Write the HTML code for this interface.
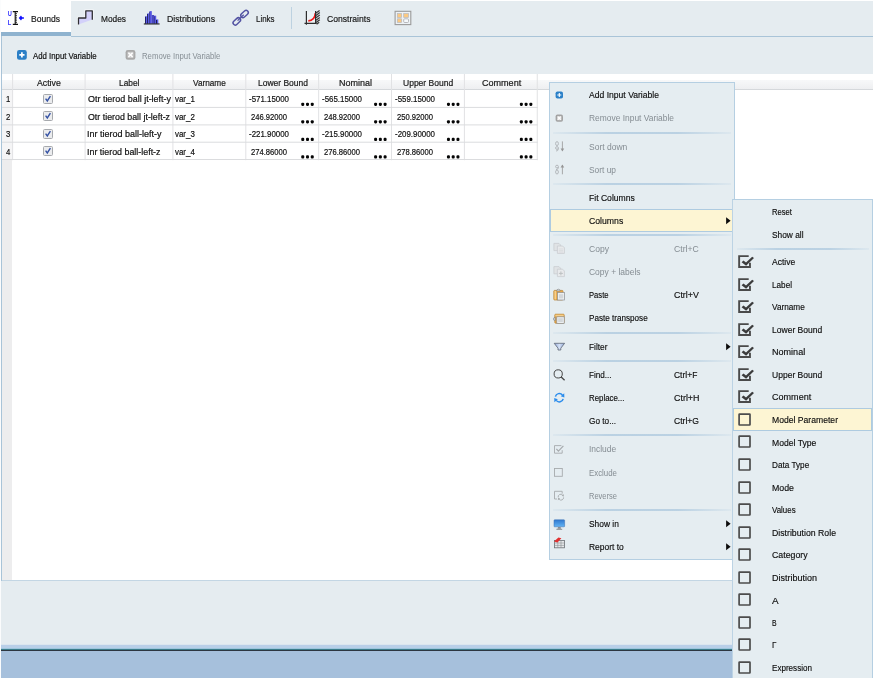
<!DOCTYPE html><html><head><meta charset="utf-8"><title>Bounds</title><style>
html,body{margin:0;padding:0;}
body{width:876px;height:678px;position:relative;overflow:hidden;background:#fff;font-family:"Liberation Sans",sans-serif;font-size:9.4px;color:#111;}
.abs{position:absolute;}
.t{position:absolute;white-space:nowrap;line-height:14px;height:14px;transform-origin:0 50%;}
.hdr{position:absolute;top:74px;height:15px;border-bottom:1px solid #d5d8db;background:linear-gradient(#ffffff 0%,#ffffff 38%,#f7f8f9 42%,#eeeff1 100%);box-sizing:content-box;}
.hl{position:absolute;height:1px;background:#e4e5e7;}
.vl{position:absolute;width:1px;background:#e9eaec;}
.dots{position:absolute;width:13px;height:3.2px;}
.dots i{position:absolute;top:0;width:3.2px;height:3.2px;background:#0a0a0a;border-radius:1.2px;}
.menu{position:absolute;background:#e5edf1;border:1px solid #b5cfe2;box-sizing:border-box;}
.sep{position:absolute;height:2px;margin-top:-0.5px;background:linear-gradient(90deg,rgba(176,203,224,0.15),rgba(172,200,222,0.75) 30%,rgba(172,200,222,0.75) 70%,rgba(176,203,224,0.15));}
.hi{position:absolute;background:#fdf5d3;border:1px solid #aecbe0;box-sizing:border-box;}
.arrow{position:absolute;width:0;height:0;border-top:3.5px solid transparent;border-bottom:3.5px solid transparent;border-left:4.6px solid #111;}
svg{position:absolute;overflow:visible;}
</style></head><body>
<div style="position:absolute;left:0;top:0;width:876px;height:678px;will-change:transform">
<div class="abs" style="left:0;top:1px;width:873px;height:73px;background:#e5ecf0"></div>
<div class="abs" style="left:0;top:0;width:71px;height:33px;background:#fff"></div>
<div class="abs" style="left:1px;top:32px;width:70px;height:4px;background:#8fb3cf"></div>
<div class="abs" style="left:71px;top:36px;width:802px;height:1px;background:#a9c4d8"></div>
<div class="abs" style="left:1px;top:36px;width:1px;height:612px;background:#a9c4d8"></div>
<div class="abs" style="left:291px;top:7px;width:1px;height:22px;background:#bdd2e1"></div>
<svg style="left:0;top:0" width="440" height="74" viewBox="0 0 440 74">
<!-- bounds icon -->
<g>
<text x="7.8" y="15.8" font-family="Liberation Sans, sans-serif" font-size="6.4" font-weight="bold" fill="#3434ff" textLength="4.1" lengthAdjust="spacingAndGlyphs">U</text>
<text x="7.8" y="24.8" font-family="Liberation Sans, sans-serif" font-size="6.4" font-weight="bold" fill="#3434ff" textLength="3.5" lengthAdjust="spacingAndGlyphs">L</text>
<path d="M12.8 11.6 H18 M12.8 24.4 H18 M15.2 11.6 V24.4" stroke="#111" stroke-width="1.1" fill="none"/>
<path d="M15.2 13.6 h1.8 M15.2 15.4 h1.8 M15.2 17.2 h1.8 M15.2 19 h1.8 M15.2 20.8 h1.8 M15.2 22.6 h1.8" stroke="#111" stroke-width="0.8"/>
<path d="M18.7 18 L21 15.6 L22.2 17.3 L23.9 17.3 L23.9 18.7 L22.2 18.7 L21 20.4 Z" fill="#1010ff"/>
</g>
<!-- modes icon -->
<g>
<path d="M78.5 24.4 V18 H85.8 V10.8 H92.3 V19.6" stroke="#fff" stroke-width="2.6" fill="none" opacity="0.8"/>
<path d="M78.5 24.4 V18 H85.8 V10.8 H92.3 V19.6 Z" fill="#d3d1fa"/>
<path d="M78.5 24.6 V18 H85.8 V10.8 H92.3 V19.8" stroke="#2f2f33" stroke-width="1.3" fill="none" stroke-linejoin="round"/>
</g>
<!-- distributions icon -->
<g>
<rect x="145" y="16.3" width="2.2" height="7.4" fill="#5a5aea"/><rect x="145" y="16.8" width="0.7" height="6.9" fill="#0a0a2a"/>
<rect x="147.2" y="13.4" width="2.2" height="10.3" fill="#5a5aea"/><rect x="147.2" y="14" width="0.7" height="9.7" fill="#0a0a2a"/>
<rect x="149.4" y="11.1" width="2.4" height="12.6" fill="#5252e0"/><rect x="149.4" y="12" width="0.6" height="11.7" fill="#20206a"/>
<rect x="151.8" y="15" width="2.3" height="8.7" fill="#4848c0"/>
<rect x="154.1" y="15.7" width="2.1" height="8" fill="#5a5aea"/><rect x="154.1" y="16.2" width="0.6" height="7.5" fill="#20206a"/>
<rect x="156.2" y="19.4" width="2.1" height="4.3" fill="#5a5aea"/><rect x="156.2" y="19.9" width="0.8" height="3.8" fill="#0a0a2a"/>
<rect x="143.8" y="23.4" width="15.8" height="1.1" fill="#222"/>
</g>
<!-- links icon -->
<g fill="none" stroke="#5252a2" stroke-width="1.45">
<rect x="-4.3" y="-2.2" width="8.6" height="4.4" rx="2.2" transform="translate(236.8 21.4) rotate(-43)"/>
<rect x="-4.3" y="-2.2" width="8.6" height="4.4" rx="2.2" transform="translate(244.5 14) rotate(-43)"/>
<path d="M237.6 20.6 L243.7 14.8" stroke-width="1.3"/>
</g>
<!-- constraints icon -->
<g>
<rect x="306.4" y="11.5" width="9.2" height="11.8" fill="#edf3f6"/>
<path d="M316 13 l3.6 -2.6 M316 15.4 l3.8 -2.8 M316 17.8 l3.8 -2.8 M316 20.2 l3.8 -2.8 M316 22.6 l3.8 -2.8 M316.6 24.2 l2.6 -2" stroke="#3a3a3a" stroke-width="1.25"/>
<path d="M308.3 20.9 C312.5 20.6 315 18 315.4 13" stroke="#f01818" stroke-width="1.7" fill="none"/>
<path d="M306.4 11.1 V24.7 M304.5 23.3 H316.7 M315.6 11.1 V23.3" stroke="#2e2e2e" stroke-width="1.2" fill="none"/>
</g>
<!-- grid icon -->
<g>
<rect x="395.1" y="11.3" width="15.7" height="13.3" fill="#edf2f6" stroke="#9a9a9a" stroke-width="1.1"/>
<rect x="397.3" y="13.6" width="4.3" height="3.8" fill="#fbc982" stroke="#b8b8bc" stroke-width="0.7"/>
<rect x="397.3" y="18.8" width="4.3" height="3.7" fill="#fbc982" stroke="#b8b8bc" stroke-width="0.7"/>
<rect x="403.7" y="13.6" width="4.8" height="3.8" fill="#fbc982" stroke="#b8b8bc" stroke-width="0.7"/>
<rect x="403.7" y="18.8" width="4.8" height="3.7" rx="1" fill="#f6f9fb" stroke="#a8a8ac" stroke-width="0.8"/>
</g>
<!-- toolbar add icon -->
<g>
<rect x="17" y="50" width="9.8" height="9.8" rx="2.2" fill="#2b7fc6"/>
<path d="M21.9 52.3 V57.5 M19.3 54.9 H24.5" stroke="#fff" stroke-width="1.7"/>
</g>
<!-- toolbar remove icon -->
<g>
<rect x="125.6" y="50" width="9.8" height="9.8" rx="2.2" fill="#a9a9a9"/>
<rect x="127.4" y="51.8" width="6.2" height="6.2" rx="0.8" fill="#c9c9c9"/>
<path d="M128.4 52.8 L132.6 57 M132.6 52.8 L128.4 57" stroke="#fff" stroke-width="1.5"/>
</g>
</svg>

<div class="abs" style="left:2px;top:74px;width:10px;height:86px;background:#f5f5f6"></div><div class="abs" style="left:2px;top:160px;width:10px;height:420px;background:#ededee"></div>
<div class="hdr" style="left:2px;width:871px"></div>
<svg style="left:0;top:70px" width="560" height="100" viewBox="0 70 560 100"><rect x="12.10" y="74" width="1" height="86.2" fill="#e1e2e4"/><rect x="84.60" y="74" width="1" height="86.2" fill="#e1e2e4"/><rect x="172.40" y="74" width="1" height="86.2" fill="#e1e2e4"/><rect x="245.30" y="74" width="1" height="86.2" fill="#e1e2e4"/><rect x="318.15" y="74" width="1" height="86.2" fill="#e1e2e4"/><rect x="391.00" y="74" width="1" height="86.2" fill="#e1e2e4"/><rect x="463.90" y="74" width="1" height="86.2" fill="#e1e2e4"/><rect x="536.75" y="74" width="1" height="86.2" fill="#e1e2e4"/><rect x="2" y="106.90" width="535.7" height="1" fill="#dbdcde"/><rect x="2" y="124.40" width="535.7" height="1" fill="#dbdcde"/><rect x="2" y="141.70" width="535.7" height="1" fill="#dbdcde"/><rect x="2" y="159.00" width="535.7" height="1" fill="#dbdcde"/><rect x="301.25" y="102.70" width="3.0" height="3.2" rx="1.1" fill="#050505"/><rect x="306.00" y="102.70" width="3.0" height="3.2" rx="1.1" fill="#050505"/><rect x="310.75" y="102.70" width="3.0" height="3.2" rx="1.1" fill="#050505"/><rect x="374.10" y="102.70" width="3.0" height="3.2" rx="1.1" fill="#050505"/><rect x="378.85" y="102.70" width="3.0" height="3.2" rx="1.1" fill="#050505"/><rect x="383.60" y="102.70" width="3.0" height="3.2" rx="1.1" fill="#050505"/><rect x="446.95" y="102.70" width="3.0" height="3.2" rx="1.1" fill="#050505"/><rect x="451.70" y="102.70" width="3.0" height="3.2" rx="1.1" fill="#050505"/><rect x="456.45" y="102.70" width="3.0" height="3.2" rx="1.1" fill="#050505"/><rect x="519.85" y="102.70" width="3.0" height="3.2" rx="1.1" fill="#050505"/><rect x="524.60" y="102.70" width="3.0" height="3.2" rx="1.1" fill="#050505"/><rect x="529.35" y="102.70" width="3.0" height="3.2" rx="1.1" fill="#050505"/><rect x="301.25" y="120.20" width="3.0" height="3.2" rx="1.1" fill="#050505"/><rect x="306.00" y="120.20" width="3.0" height="3.2" rx="1.1" fill="#050505"/><rect x="310.75" y="120.20" width="3.0" height="3.2" rx="1.1" fill="#050505"/><rect x="374.10" y="120.20" width="3.0" height="3.2" rx="1.1" fill="#050505"/><rect x="378.85" y="120.20" width="3.0" height="3.2" rx="1.1" fill="#050505"/><rect x="383.60" y="120.20" width="3.0" height="3.2" rx="1.1" fill="#050505"/><rect x="446.95" y="120.20" width="3.0" height="3.2" rx="1.1" fill="#050505"/><rect x="451.70" y="120.20" width="3.0" height="3.2" rx="1.1" fill="#050505"/><rect x="456.45" y="120.20" width="3.0" height="3.2" rx="1.1" fill="#050505"/><rect x="519.85" y="120.20" width="3.0" height="3.2" rx="1.1" fill="#050505"/><rect x="524.60" y="120.20" width="3.0" height="3.2" rx="1.1" fill="#050505"/><rect x="529.35" y="120.20" width="3.0" height="3.2" rx="1.1" fill="#050505"/><rect x="301.25" y="137.80" width="3.0" height="3.2" rx="1.1" fill="#050505"/><rect x="306.00" y="137.80" width="3.0" height="3.2" rx="1.1" fill="#050505"/><rect x="310.75" y="137.80" width="3.0" height="3.2" rx="1.1" fill="#050505"/><rect x="374.10" y="137.80" width="3.0" height="3.2" rx="1.1" fill="#050505"/><rect x="378.85" y="137.80" width="3.0" height="3.2" rx="1.1" fill="#050505"/><rect x="383.60" y="137.80" width="3.0" height="3.2" rx="1.1" fill="#050505"/><rect x="446.95" y="137.80" width="3.0" height="3.2" rx="1.1" fill="#050505"/><rect x="451.70" y="137.80" width="3.0" height="3.2" rx="1.1" fill="#050505"/><rect x="456.45" y="137.80" width="3.0" height="3.2" rx="1.1" fill="#050505"/><rect x="519.85" y="137.80" width="3.0" height="3.2" rx="1.1" fill="#050505"/><rect x="524.60" y="137.80" width="3.0" height="3.2" rx="1.1" fill="#050505"/><rect x="529.35" y="137.80" width="3.0" height="3.2" rx="1.1" fill="#050505"/><rect x="301.25" y="155.30" width="3.0" height="3.2" rx="1.1" fill="#050505"/><rect x="306.00" y="155.30" width="3.0" height="3.2" rx="1.1" fill="#050505"/><rect x="310.75" y="155.30" width="3.0" height="3.2" rx="1.1" fill="#050505"/><rect x="374.10" y="155.30" width="3.0" height="3.2" rx="1.1" fill="#050505"/><rect x="378.85" y="155.30" width="3.0" height="3.2" rx="1.1" fill="#050505"/><rect x="383.60" y="155.30" width="3.0" height="3.2" rx="1.1" fill="#050505"/><rect x="446.95" y="155.30" width="3.0" height="3.2" rx="1.1" fill="#050505"/><rect x="451.70" y="155.30" width="3.0" height="3.2" rx="1.1" fill="#050505"/><rect x="456.45" y="155.30" width="3.0" height="3.2" rx="1.1" fill="#050505"/><rect x="519.85" y="155.30" width="3.0" height="3.2" rx="1.1" fill="#050505"/><rect x="524.60" y="155.30" width="3.0" height="3.2" rx="1.1" fill="#050505"/><rect x="529.35" y="155.30" width="3.0" height="3.2" rx="1.1" fill="#050505"/></svg>
<div class="abs" style="left:43px;top:93.9px;width:10px;height:10px;border:1px solid #a6a9ad;border-radius:1.5px;box-sizing:border-box;background:#ebecee"><svg width="8" height="8" viewBox="0 0 8 8" style="left:0;top:0"><path d="M1.6 3.6 L3.3 6 L6.4 1.2" stroke="#3552a4" stroke-width="1.4" fill="none"/></svg></div>
<div class="abs" style="left:43px;top:111.4px;width:10px;height:10px;border:1px solid #a6a9ad;border-radius:1.5px;box-sizing:border-box;background:#ebecee"><svg width="8" height="8" viewBox="0 0 8 8" style="left:0;top:0"><path d="M1.6 3.6 L3.3 6 L6.4 1.2" stroke="#3552a4" stroke-width="1.4" fill="none"/></svg></div>
<div class="abs" style="left:43px;top:128.9px;width:10px;height:10px;border:1px solid #a6a9ad;border-radius:1.5px;box-sizing:border-box;background:#ebecee"><svg width="8" height="8" viewBox="0 0 8 8" style="left:0;top:0"><path d="M1.6 3.6 L3.3 6 L6.4 1.2" stroke="#3552a4" stroke-width="1.4" fill="none"/></svg></div>
<div class="abs" style="left:43px;top:146.4px;width:10px;height:10px;border:1px solid #a6a9ad;border-radius:1.5px;box-sizing:border-box;background:#ebecee"><svg width="8" height="8" viewBox="0 0 8 8" style="left:0;top:0"><path d="M1.6 3.6 L3.3 6 L6.4 1.2" stroke="#3552a4" stroke-width="1.4" fill="none"/></svg></div>
<div class="abs" style="left:2px;top:580px;width:871px;height:1px;background:#c3d6e4"></div>
<div class="abs" style="left:0;top:581px;width:873px;height:64px;background:#e5ecf0"></div>
<svg style="left:0;top:644px" width="873" height="34" viewBox="0 644 873 34"><rect x="0" y="644.8" width="873" height="5" fill="#b9cfe8"/><rect x="0" y="650" width="873" height="28" fill="#a6c0dc"/><rect x="0" y="648.8" width="873" height="1" fill="#35a3b6"/><rect x="0" y="649.7" width="873" height="1.05" fill="#05080c"/></svg>
<div class="abs" style="left:0;top:0;width:1px;height:678px;background:#fbfcfd"></div>
<div class="menu" style="left:549px;top:82px;width:186px;height:478px"></div>
<div class="hi" style="left:550px;top:209px;width:183px;height:23px"></div>
<svg style="left:725px;top:216px" width="8" height="10" viewBox="0 0 8 10"><path d="M1.1 1.2 L5.6 4.7 L1.1 8.2 Z" fill="#0c0c0c"/></svg>
<svg style="left:725px;top:342px" width="8" height="10" viewBox="0 0 8 10"><path d="M1.1 1.2 L5.6 4.7 L1.1 8.2 Z" fill="#0c0c0c"/></svg>
<svg style="left:725px;top:519px" width="8" height="10" viewBox="0 0 8 10"><path d="M1.1 1.2 L5.6 4.7 L1.1 8.2 Z" fill="#0c0c0c"/></svg>
<svg style="left:725px;top:542px" width="8" height="10" viewBox="0 0 8 10"><path d="M1.1 1.2 L5.6 4.7 L1.1 8.2 Z" fill="#0c0c0c"/></svg>
<div class="sep" style="left:553px;top:132px;width:178px"></div>
<div class="sep" style="left:553px;top:183px;width:178px"></div>
<div class="sep" style="left:553px;top:234px;width:178px"></div>
<div class="sep" style="left:553px;top:332px;width:178px"></div>
<div class="sep" style="left:553px;top:360px;width:178px"></div>
<div class="sep" style="left:553px;top:434px;width:178px"></div>
<div class="sep" style="left:553px;top:509px;width:178px"></div>
<svg style="left:549px;top:82px" width="24" height="478" viewBox="549 82 24 478">
<!-- add -->
<rect x="555.6" y="91.4" width="7.4" height="7.2" rx="1.8" fill="#2a80c8"/>
<path d="M559.3 93 V97 M557.3 95 H561.3" stroke="#fff" stroke-width="1.1"/>
<!-- remove -->
<rect x="555.6" y="114.6" width="7.4" height="7.2" rx="1.8" fill="#a3a3a3"/>
<rect x="557.2" y="116.2" width="4.2" height="4" fill="#dedede"/>
<path d="M557.8 116.7 L560.8 119.7 M560.8 116.7 L557.8 119.7" stroke="#fff" stroke-width="1.1"/>
<!-- sort down -->
<g stroke="#a8acb0" fill="none" stroke-width="0.8">
<ellipse cx="557" cy="143.6" rx="1.4" ry="2"/><ellipse cx="557" cy="148" rx="1.4" ry="1.4"/><path d="M558.3 148.5 C558.3 150.5 557.5 151 556 150.9"/>
<path d="M562.4 141.4 V150.6" stroke="#959595" stroke-width="0.8"/>
</g>
<path d="M560.6 148.4 L562.4 151.4 L564.2 148.4 Z" fill="#959595"/>
<!-- sort up -->
<g stroke="#a8acb0" fill="none" stroke-width="0.8">
<ellipse cx="557" cy="166.6" rx="1.4" ry="1.4"/><path d="M558.3 167 C558.3 169 557.5 169.6 556 169.5"/><ellipse cx="557" cy="172" rx="1.4" ry="2"/>
<path d="M562.4 165 V174.3" stroke="#959595" stroke-width="0.8"/>
</g>
<path d="M560.6 167.4 L562.4 164.4 L564.2 167.4 Z" fill="#959595"/>
<!-- copy (disabled) -->
<g stroke="#c9cdd0" stroke-width="0.8">
<path d="M553.9 243.4 H559 L560.6 245 V250.6 H553.9 Z" fill="#e0e3e5"/>
<path d="M557.4 246 H562.6 L564.4 247.8 V253.4 H557.4 Z" fill="#e8eaec"/>
<path d="M558.8 249 H563 M558.8 250.6 H563 M558.8 252 H563" stroke="#d2d5d8" stroke-width="0.6"/>
</g>
<!-- copy + labels (disabled) -->
<g stroke="#c9cdd0" stroke-width="0.8">
<path d="M553.9 266.6 H559 L560.6 268.2 V273.8 H553.9 Z" fill="#e0e3e5"/>
<path d="M557.4 269.2 H562.6 L564.4 271 V276.6 H557.4 Z" fill="#e8eaec"/>
<path d="M560.9 271.4 V275.4 M558.9 273.4 H562.9" stroke="#b9bdc0" stroke-width="0.9"/>
</g>
<!-- paste -->
<g>
<rect x="553.8" y="290.4" width="9.2" height="9.6" rx="0.8" fill="#e9a94a" stroke="#b9822e" stroke-width="0.7"/>
<rect x="554.5" y="291" width="1.6" height="8.4" fill="#f6cf8c"/>
<path d="M556.6 291 Q556.6 289.2 558.4 289.2 Q560.2 289.2 560.2 291 Z" fill="#d8dcdf" stroke="#7d8185" stroke-width="0.6"/>
<rect x="557.6" y="292.6" width="7" height="7.4" fill="#eceff1" stroke="#8c9094" stroke-width="0.7"/>
<rect x="559" y="294.2" width="4.2" height="4.2" fill="#d3d7da"/>
</g>
<!-- paste transpose -->
<g>
<rect x="554.8" y="314.2" width="9.4" height="9" rx="0.8" fill="#e9a94a" stroke="#b9822e" stroke-width="0.7"/>
<rect x="555.4" y="314.8" width="8.2" height="1.5" fill="#f6cf8c"/>
<path d="M555.2 317.4 Q553.4 317.4 553.4 319 Q553.4 320.6 555.2 320.6 Z" fill="#d8dcdf" stroke="#7d8185" stroke-width="0.6"/>
<rect x="556.8" y="316.8" width="7.4" height="6.6" fill="#eceff1" stroke="#8c9094" stroke-width="0.7"/>
<rect x="558.2" y="318.2" width="4.6" height="3.8" fill="#d3d7da"/>
</g>
<!-- filter -->
<defs><linearGradient id="fg" x1="0" y1="0" x2="1" y2="0"><stop offset="0" stop-color="#8fa6d8"/><stop offset="0.5" stop-color="#d6e2f6"/><stop offset="1" stop-color="#8fa6d8"/></linearGradient></defs>
<path d="M554.2 343.3 H564.6 L560.8 348.2 V350 H558 V348.2 Z" fill="url(#fg)" stroke="#5d6474" stroke-width="0.8" stroke-linejoin="round"/>
<!-- find -->
<circle cx="558.2" cy="373.9" r="4.1" fill="none" stroke="#444" stroke-width="1"/>
<path d="M561.2 377 L564.6 380.2" stroke="#444" stroke-width="1.3"/>
<!-- replace -->
<g fill="none" stroke="#2a8cec" stroke-width="1.5">
<path d="M555.4 396.6 A4 4 0 0 1 562.4 395"/>
<path d="M563.2 398.8 A4 4 0 0 1 556.2 400.4"/>
</g>
<path d="M560.8 396.2 L564.2 393.2 L564.4 397.4 Z" fill="#2a8cec"/>
<path d="M557.8 399.2 L554.4 402.2 L554.2 398 Z" fill="#2a8cec"/>
<!-- include (disabled) -->
<g stroke="#a6aaad" fill="none">
<path d="M561.4 445.6 H554.5 V453.2 H562.2 V450.2" stroke-width="0.9"/>
<path d="M556.4 448.8 L558.4 451.2 L563.4 445.8" stroke-width="1.2"/>
</g>
<!-- exclude (disabled) -->
<rect x="554.5" y="468.5" width="7.8" height="7.8" fill="none" stroke="#a6aaad" stroke-width="0.9"/>
<!-- reverse (disabled) -->
<g stroke="#a6aaad" fill="none" stroke-width="0.9">
<path d="M557 499 H554.5 V491.3 H562.2 V493.6"/>
<path d="M558.2 497.2 A2.6 2.6 0 0 1 562.6 495 M563.6 497.4 A2.6 2.6 0 0 1 559.2 499.4"/>
</g>
<path d="M561.6 495.6 L564 494.2 L563.6 496.8 Z M560.2 498.8 L557.8 500.2 L558.2 497.6 Z" fill="#a6aaad"/>
<!-- show in -->
<defs><linearGradient id="mg" x1="0" y1="0" x2="0" y2="1"><stop offset="0" stop-color="#2f78d0"/><stop offset="1" stop-color="#63b4f4"/></linearGradient></defs>
<rect x="554" y="519.8" width="10.6" height="7" rx="0.6" fill="url(#mg)" stroke="#3a6fb0" stroke-width="0.5"/>
<path d="M558 527 H560.6 L561 528.8 H557.6 Z" fill="#8a8e92"/><rect x="556.4" y="528.8" width="5.8" height="0.9" fill="#7a7e82"/>
<!-- report to -->
<rect x="554.6" y="540.6" width="9.8" height="7.2" fill="#e6e8ea" stroke="#6a6e72" stroke-width="0.8"/>
<path d="M557.8 540.6 V547.8 M561 540.6 V547.8 M554.6 543 H564.4 M554.6 545.4 H564.4" stroke="#8a8e92" stroke-width="0.6"/>
<path d="M554 541.6 L558.4 537.6 L561.4 538.2 L557.4 542.6 Z" fill="#e23030"/>
</svg>

<div class="menu" style="left:732.3px;top:199px;width:140.7px;height:490px;border-left:1.5px solid #bcd3e4"></div>
<div class="hi" style="left:733.4px;top:408.2px;width:139px;height:22.6px"></div>
<svg style="left:737px;top:253.8px" width="18" height="16" viewBox="0 0 18 16"><path d="M11.7 2.15 H2.15 V12.95 H12.95 V8.8" stroke="#4a4a4a" stroke-width="1.9" fill="none"/><path d="M4.6 8.3 L6.5 6.5 L9 8.6 L15.2 2.7 L17 4.1 L9.1 11.7 Z" fill="#3c3c3c"/></svg>
<svg style="left:737px;top:276.6px" width="18" height="16" viewBox="0 0 18 16"><path d="M11.7 2.15 H2.15 V12.95 H12.95 V8.8" stroke="#4a4a4a" stroke-width="1.9" fill="none"/><path d="M4.6 8.3 L6.5 6.5 L9 8.6 L15.2 2.7 L17 4.1 L9.1 11.7 Z" fill="#3c3c3c"/></svg>
<svg style="left:737px;top:299.2px" width="18" height="16" viewBox="0 0 18 16"><path d="M11.7 2.15 H2.15 V12.95 H12.95 V8.8" stroke="#4a4a4a" stroke-width="1.9" fill="none"/><path d="M4.6 8.3 L6.5 6.5 L9 8.6 L15.2 2.7 L17 4.1 L9.1 11.7 Z" fill="#3c3c3c"/></svg>
<svg style="left:737px;top:321.5px" width="18" height="16" viewBox="0 0 18 16"><path d="M11.7 2.15 H2.15 V12.95 H12.95 V8.8" stroke="#4a4a4a" stroke-width="1.9" fill="none"/><path d="M4.6 8.3 L6.5 6.5 L9 8.6 L15.2 2.7 L17 4.1 L9.1 11.7 Z" fill="#3c3c3c"/></svg>
<svg style="left:737px;top:344.0px" width="18" height="16" viewBox="0 0 18 16"><path d="M11.7 2.15 H2.15 V12.95 H12.95 V8.8" stroke="#4a4a4a" stroke-width="1.9" fill="none"/><path d="M4.6 8.3 L6.5 6.5 L9 8.6 L15.2 2.7 L17 4.1 L9.1 11.7 Z" fill="#3c3c3c"/></svg>
<svg style="left:737px;top:366.7px" width="18" height="16" viewBox="0 0 18 16"><path d="M11.7 2.15 H2.15 V12.95 H12.95 V8.8" stroke="#4a4a4a" stroke-width="1.9" fill="none"/><path d="M4.6 8.3 L6.5 6.5 L9 8.6 L15.2 2.7 L17 4.1 L9.1 11.7 Z" fill="#3c3c3c"/></svg>
<svg style="left:737px;top:389.3px" width="18" height="16" viewBox="0 0 18 16"><path d="M11.7 2.15 H2.15 V12.95 H12.95 V8.8" stroke="#4a4a4a" stroke-width="1.9" fill="none"/><path d="M4.6 8.3 L6.5 6.5 L9 8.6 L15.2 2.7 L17 4.1 L9.1 11.7 Z" fill="#3c3c3c"/></svg>
<svg style="left:737px;top:411.6px" width="18" height="16" viewBox="0 0 18 16"><rect x="2.1" y="2.1" width="10.9" height="10.9" rx="0.4" stroke="#4c4c4c" stroke-width="1.7" fill="none"/></svg>
<svg style="left:737px;top:434.4px" width="18" height="16" viewBox="0 0 18 16"><rect x="2.1" y="2.1" width="10.9" height="10.9" rx="0.4" stroke="#4c4c4c" stroke-width="1.7" fill="none"/></svg>
<svg style="left:737px;top:457.0px" width="18" height="16" viewBox="0 0 18 16"><rect x="2.1" y="2.1" width="10.9" height="10.9" rx="0.4" stroke="#4c4c4c" stroke-width="1.7" fill="none"/></svg>
<svg style="left:737px;top:479.5px" width="18" height="16" viewBox="0 0 18 16"><rect x="2.1" y="2.1" width="10.9" height="10.9" rx="0.4" stroke="#4c4c4c" stroke-width="1.7" fill="none"/></svg>
<svg style="left:737px;top:502.0px" width="18" height="16" viewBox="0 0 18 16"><rect x="2.1" y="2.1" width="10.9" height="10.9" rx="0.4" stroke="#4c4c4c" stroke-width="1.7" fill="none"/></svg>
<svg style="left:737px;top:524.5px" width="18" height="16" viewBox="0 0 18 16"><rect x="2.1" y="2.1" width="10.9" height="10.9" rx="0.4" stroke="#4c4c4c" stroke-width="1.7" fill="none"/></svg>
<svg style="left:737px;top:547.3px" width="18" height="16" viewBox="0 0 18 16"><rect x="2.1" y="2.1" width="10.9" height="10.9" rx="0.4" stroke="#4c4c4c" stroke-width="1.7" fill="none"/></svg>
<svg style="left:737px;top:569.8px" width="18" height="16" viewBox="0 0 18 16"><rect x="2.1" y="2.1" width="10.9" height="10.9" rx="0.4" stroke="#4c4c4c" stroke-width="1.7" fill="none"/></svg>
<svg style="left:737px;top:592.3px" width="18" height="16" viewBox="0 0 18 16"><rect x="2.1" y="2.1" width="10.9" height="10.9" rx="0.4" stroke="#4c4c4c" stroke-width="1.7" fill="none"/></svg>
<svg style="left:737px;top:614.5px" width="18" height="16" viewBox="0 0 18 16"><rect x="2.1" y="2.1" width="10.9" height="10.9" rx="0.4" stroke="#4c4c4c" stroke-width="1.7" fill="none"/></svg>
<svg style="left:737px;top:637.2px" width="18" height="16" viewBox="0 0 18 16"><rect x="2.1" y="2.1" width="10.9" height="10.9" rx="0.4" stroke="#4c4c4c" stroke-width="1.7" fill="none"/></svg>
<svg style="left:737px;top:659.7px" width="18" height="16" viewBox="0 0 18 16"><rect x="2.1" y="2.1" width="10.9" height="10.9" rx="0.4" stroke="#4c4c4c" stroke-width="1.7" fill="none"/></svg>
<div class="sep" style="left:737px;top:248px;width:132px"></div>
<div class="t" style="left:31.00px;top:12px;font-size:9.9px;color:#1c1c1c;transform:scaleX(0.8657);-webkit-text-stroke:0.2px #111;">Bounds</div>
<div class="t" style="left:100.75px;top:12px;font-size:9.9px;color:#1c1c1c;transform:scaleX(0.8434);-webkit-text-stroke:0.2px #111;">Modes</div>
<div class="t" style="left:167.00px;top:12px;font-size:9.9px;color:#1c1c1c;transform:scaleX(0.8833);-webkit-text-stroke:0.2px #111;">Distributions</div>
<div class="t" style="left:256.00px;top:12px;font-size:9.9px;color:#1c1c1c;transform:scaleX(0.8022);-webkit-text-stroke:0.2px #111;">Links</div>
<div class="t" style="left:327.25px;top:12px;font-size:9.9px;color:#1c1c1c;transform:scaleX(0.8708);-webkit-text-stroke:0.2px #111;">Constraints</div>
<div class="t" style="left:33.10px;top:49px;font-size:8.8px;color:#111;transform:scaleX(0.8866);-webkit-text-stroke:0.2px #111;">Add Input Variable</div>
<div class="t" style="left:141.60px;top:49px;font-size:8.8px;color:#868e94;transform:scaleX(0.8824);">Remove Input Variable</div>
<div class="t" style="left:36.70px;top:76px;font-size:9.0px;color:#1e1e1e;transform:scaleX(0.9708);-webkit-text-stroke:0.2px #111;">Active</div>
<div class="t" style="left:118.80px;top:76px;font-size:9.0px;color:#1e1e1e;transform:scaleX(0.9260);-webkit-text-stroke:0.2px #111;">Label</div>
<div class="t" style="left:193.10px;top:76px;font-size:9.0px;color:#1e1e1e;transform:scaleX(0.9147);-webkit-text-stroke:0.2px #111;">Varname</div>
<div class="t" style="left:257.90px;top:76px;font-size:9.0px;color:#1e1e1e;transform:scaleX(0.9426);-webkit-text-stroke:0.2px #111;">Lower Bound</div>
<div class="t" style="left:338.90px;top:76px;font-size:9.0px;color:#1e1e1e;transform:scaleX(0.9995);-webkit-text-stroke:0.2px #111;">Nominal</div>
<div class="t" style="left:402.90px;top:76px;font-size:9.0px;color:#1e1e1e;transform:scaleX(0.9463);-webkit-text-stroke:0.2px #111;">Upper Bound</div>
<div class="t" style="left:481.80px;top:76px;font-size:9.0px;color:#1e1e1e;transform:scaleX(1.0047);-webkit-text-stroke:0.2px #111;">Comment</div>
<div class="t" style="left:5.80px;top:92px;font-size:9.8px;color:#111;transform:scaleX(0.7885);-webkit-text-stroke:0.2px #111;">1</div>
<div class="t" style="left:87.80px;top:92px;font-size:9.0px;color:#111;transform:scaleX(0.9936);-webkit-text-stroke:0.2px #111;">Otr tierod ball jt-left-y</div>
<div class="t" style="left:175.00px;top:92px;font-size:9.0px;color:#111;transform:scaleX(0.8794);-webkit-text-stroke:0.2px #111;">var_1</div>
<div class="t" style="left:249.00px;top:92px;font-size:9.4px;color:#111;transform:scaleX(0.8429);-webkit-text-stroke:0.2px #111;">-571.15000</div>
<div class="t" style="left:322.00px;top:92px;font-size:9.4px;color:#111;transform:scaleX(0.8429);-webkit-text-stroke:0.2px #111;">-565.15000</div>
<div class="t" style="left:395.00px;top:92px;font-size:9.4px;color:#111;transform:scaleX(0.8429);-webkit-text-stroke:0.2px #111;">-559.15000</div>
<div class="t" style="left:5.80px;top:110px;font-size:9.8px;color:#111;transform:scaleX(0.7885);-webkit-text-stroke:0.2px #111;">2</div>
<div class="t" style="left:87.80px;top:110px;font-size:9.0px;color:#111;transform:scaleX(0.9817);-webkit-text-stroke:0.2px #111;">Otr tierod ball jt-left-z</div>
<div class="t" style="left:175.00px;top:110px;font-size:9.0px;color:#111;transform:scaleX(0.8794);-webkit-text-stroke:0.2px #111;">var_2</div>
<div class="t" style="left:251.00px;top:110px;font-size:9.4px;color:#111;transform:scaleX(0.8121);-webkit-text-stroke:0.2px #111;">246.92000</div>
<div class="t" style="left:324.00px;top:110px;font-size:9.4px;color:#111;transform:scaleX(0.8121);-webkit-text-stroke:0.2px #111;">248.92000</div>
<div class="t" style="left:397.00px;top:110px;font-size:9.4px;color:#111;transform:scaleX(0.8121);-webkit-text-stroke:0.2px #111;">250.92000</div>
<div class="t" style="left:5.80px;top:127px;font-size:9.8px;color:#111;transform:scaleX(0.7885);-webkit-text-stroke:0.2px #111;">3</div>
<div class="t" style="left:87.30px;top:127px;font-size:9.0px;color:#111;transform:scaleX(0.9996);-webkit-text-stroke:0.2px #111;">Inr tierod ball-left-y</div>
<div class="t" style="left:175.00px;top:127px;font-size:9.0px;color:#111;transform:scaleX(0.8794);-webkit-text-stroke:0.2px #111;">var_3</div>
<div class="t" style="left:249.00px;top:127px;font-size:9.4px;color:#111;transform:scaleX(0.8429);-webkit-text-stroke:0.2px #111;">-221.90000</div>
<div class="t" style="left:322.00px;top:127px;font-size:9.4px;color:#111;transform:scaleX(0.8429);-webkit-text-stroke:0.2px #111;">-215.90000</div>
<div class="t" style="left:395.00px;top:127px;font-size:9.4px;color:#111;transform:scaleX(0.8429);-webkit-text-stroke:0.2px #111;">-209.90000</div>
<div class="t" style="left:5.80px;top:145px;font-size:9.8px;color:#111;transform:scaleX(0.7885);-webkit-text-stroke:0.2px #111;">4</div>
<div class="t" style="left:87.30px;top:145px;font-size:9.0px;color:#111;transform:scaleX(0.9862);-webkit-text-stroke:0.2px #111;">Inr tierod ball-left-z</div>
<div class="t" style="left:175.00px;top:145px;font-size:9.0px;color:#111;transform:scaleX(0.8794);-webkit-text-stroke:0.2px #111;">var_4</div>
<div class="t" style="left:251.00px;top:145px;font-size:9.4px;color:#111;transform:scaleX(0.8121);-webkit-text-stroke:0.2px #111;">274.86000</div>
<div class="t" style="left:324.00px;top:145px;font-size:9.4px;color:#111;transform:scaleX(0.8121);-webkit-text-stroke:0.2px #111;">276.86000</div>
<div class="t" style="left:397.00px;top:145px;font-size:9.4px;color:#111;transform:scaleX(0.8121);-webkit-text-stroke:0.2px #111;">278.86000</div>
<div class="t" style="left:588.50px;top:88px;font-size:9.4px;color:#0c0c0c;transform:scaleX(0.9156);-webkit-text-stroke:0.15px #0c0c0c;">Add Input Variable</div>
<div class="t" style="left:588.50px;top:111px;font-size:9.4px;color:#858d93;transform:scaleX(0.8978);">Remove Input Variable</div>
<div class="t" style="left:588.50px;top:140px;font-size:9.4px;color:#858d93;transform:scaleX(0.9072);">Sort down</div>
<div class="t" style="left:588.50px;top:163px;font-size:9.4px;color:#858d93;transform:scaleX(0.8930);">Sort up</div>
<div class="t" style="left:588.50px;top:191px;font-size:9.4px;color:#0c0c0c;transform:scaleX(0.9157);-webkit-text-stroke:0.15px #0c0c0c;">Fit Columns</div>
<div class="t" style="left:588.50px;top:214px;font-size:9.4px;color:#0c0c0c;transform:scaleX(0.9270);-webkit-text-stroke:0.15px #0c0c0c;">Columns</div>
<div class="t" style="left:588.50px;top:242px;font-size:9.4px;color:#858d93;transform:scaleX(0.9136);">Copy</div>
<div class="t" style="left:674.00px;top:242px;font-size:9.4px;color:#858d93;transform:scaleX(0.9244);">Ctrl+C</div>
<div class="t" style="left:588.50px;top:265px;font-size:9.4px;color:#858d93;transform:scaleX(0.9040);">Copy + labels</div>
<div class="t" style="left:588.50px;top:288px;font-size:9.4px;color:#0c0c0c;transform:scaleX(0.8130);-webkit-text-stroke:0.15px #0c0c0c;">Paste</div>
<div class="t" style="left:674.00px;top:288px;font-size:9.4px;color:#0c0c0c;transform:scaleX(0.9425);-webkit-text-stroke:0.15px #0c0c0c;">Ctrl+V</div>
<div class="t" style="left:588.50px;top:311px;font-size:9.4px;color:#0c0c0c;transform:scaleX(0.8664);-webkit-text-stroke:0.15px #0c0c0c;">Paste transpose</div>
<div class="t" style="left:588.50px;top:340px;font-size:9.4px;color:#0c0c0c;transform:scaleX(0.8828);-webkit-text-stroke:0.15px #0c0c0c;">Filter</div>
<div class="t" style="left:588.50px;top:368px;font-size:9.4px;color:#0c0c0c;transform:scaleX(0.8671);-webkit-text-stroke:0.15px #0c0c0c;">Find...</div>
<div class="t" style="left:674.00px;top:368px;font-size:9.4px;color:#0c0c0c;transform:scaleX(0.9038);-webkit-text-stroke:0.15px #0c0c0c;">Ctrl+F</div>
<div class="t" style="left:588.50px;top:391px;font-size:9.4px;color:#0c0c0c;transform:scaleX(0.8385);-webkit-text-stroke:0.15px #0c0c0c;">Replace...</div>
<div class="t" style="left:674.00px;top:391px;font-size:9.4px;color:#0c0c0c;transform:scaleX(0.9505);-webkit-text-stroke:0.15px #0c0c0c;">Ctrl+H</div>
<div class="t" style="left:588.50px;top:414px;font-size:9.4px;color:#0c0c0c;transform:scaleX(0.8780);-webkit-text-stroke:0.15px #0c0c0c;">Go to...</div>
<div class="t" style="left:674.00px;top:414px;font-size:9.4px;color:#0c0c0c;transform:scaleX(0.9138);-webkit-text-stroke:0.15px #0c0c0c;">Ctrl+G</div>
<div class="t" style="left:588.50px;top:442px;font-size:9.4px;color:#858d93;transform:scaleX(0.8996);">Include</div>
<div class="t" style="left:588.50px;top:466px;font-size:9.4px;color:#858d93;transform:scaleX(0.8393);">Exclude</div>
<div class="t" style="left:588.50px;top:489px;font-size:9.4px;color:#858d93;transform:scaleX(0.8018);">Reverse</div>
<div class="t" style="left:588.50px;top:517px;font-size:9.4px;color:#0c0c0c;transform:scaleX(0.8963);-webkit-text-stroke:0.15px #0c0c0c;">Show in</div>
<div class="t" style="left:588.50px;top:540px;font-size:9.4px;color:#0c0c0c;transform:scaleX(0.9024);-webkit-text-stroke:0.15px #0c0c0c;">Report to</div>
<div class="t" style="left:772.00px;top:205px;font-size:9.4px;color:#0c0c0c;transform:scaleX(0.8163);-webkit-text-stroke:0.15px #0c0c0c;">Reset</div>
<div class="t" style="left:772.00px;top:228px;font-size:9.4px;color:#0c0c0c;transform:scaleX(0.8889);-webkit-text-stroke:0.15px #0c0c0c;">Show all</div>
<div class="t" style="left:772.00px;top:255px;font-size:9.4px;color:#0c0c0c;transform:scaleX(0.9126);-webkit-text-stroke:0.15px #0c0c0c;">Active</div>
<div class="t" style="left:772.00px;top:278px;font-size:9.4px;color:#0c0c0c;transform:scaleX(0.8713);-webkit-text-stroke:0.15px #0c0c0c;">Label</div>
<div class="t" style="left:772.00px;top:300px;font-size:9.4px;color:#0c0c0c;transform:scaleX(0.8783);-webkit-text-stroke:0.15px #0c0c0c;">Varname</div>
<div class="t" style="left:772.00px;top:323px;font-size:9.4px;color:#0c0c0c;transform:scaleX(0.9104);-webkit-text-stroke:0.15px #0c0c0c;">Lower Bound</div>
<div class="t" style="left:772.00px;top:345px;font-size:9.4px;color:#0c0c0c;transform:scaleX(0.9654);-webkit-text-stroke:0.15px #0c0c0c;">Nominal</div>
<div class="t" style="left:772.00px;top:368px;font-size:9.4px;color:#0c0c0c;transform:scaleX(0.9104);-webkit-text-stroke:0.15px #0c0c0c;">Upper Bound</div>
<div class="t" style="left:772.00px;top:390px;font-size:9.4px;color:#0c0c0c;transform:scaleX(0.9646);-webkit-text-stroke:0.15px #0c0c0c;">Comment</div>
<div class="t" style="left:772.00px;top:413px;font-size:9.4px;color:#0c0c0c;transform:scaleX(0.9179);-webkit-text-stroke:0.15px #0c0c0c;">Model Parameter</div>
<div class="t" style="left:772.00px;top:436px;font-size:9.4px;color:#0c0c0c;transform:scaleX(0.9172);-webkit-text-stroke:0.15px #0c0c0c;">Model Type</div>
<div class="t" style="left:772.00px;top:458px;font-size:9.4px;color:#0c0c0c;transform:scaleX(0.8740);-webkit-text-stroke:0.15px #0c0c0c;">Data Type</div>
<div class="t" style="left:772.00px;top:481px;font-size:9.4px;color:#0c0c0c;transform:scaleX(0.9380);-webkit-text-stroke:0.15px #0c0c0c;">Mode</div>
<div class="t" style="left:772.00px;top:503px;font-size:9.4px;color:#0c0c0c;transform:scaleX(0.8438);-webkit-text-stroke:0.15px #0c0c0c;">Values</div>
<div class="t" style="left:772.00px;top:526px;font-size:9.4px;color:#0c0c0c;transform:scaleX(0.9305);-webkit-text-stroke:0.15px #0c0c0c;">Distribution Role</div>
<div class="t" style="left:772.00px;top:548px;font-size:9.4px;color:#0c0c0c;transform:scaleX(0.9357);-webkit-text-stroke:0.15px #0c0c0c;">Category</div>
<div class="t" style="left:772.00px;top:571px;font-size:9.4px;color:#0c0c0c;transform:scaleX(0.9594);-webkit-text-stroke:0.15px #0c0c0c;">Distribution</div>
<div class="t" style="left:772.00px;top:594px;font-size:9.4px;color:#0c0c0c;transform:scaleX(1.0534);-webkit-text-stroke:0.15px #0c0c0c;">A</div>
<div class="t" style="left:772.00px;top:616px;font-size:9.4px;color:#0c0c0c;transform:scaleX(0.7342);-webkit-text-stroke:0.15px #0c0c0c;">B</div>
<div class="t" style="left:772.00px;top:638px;font-size:9.4px;color:#0c0c0c;transform:scaleX(0.8701);-webkit-text-stroke:0.15px #0c0c0c;">Γ</div>
<div class="t" style="left:772.00px;top:661px;font-size:9.4px;color:#0c0c0c;transform:scaleX(0.8622);-webkit-text-stroke:0.15px #0c0c0c;">Expression</div>
</div>
</body></html>
